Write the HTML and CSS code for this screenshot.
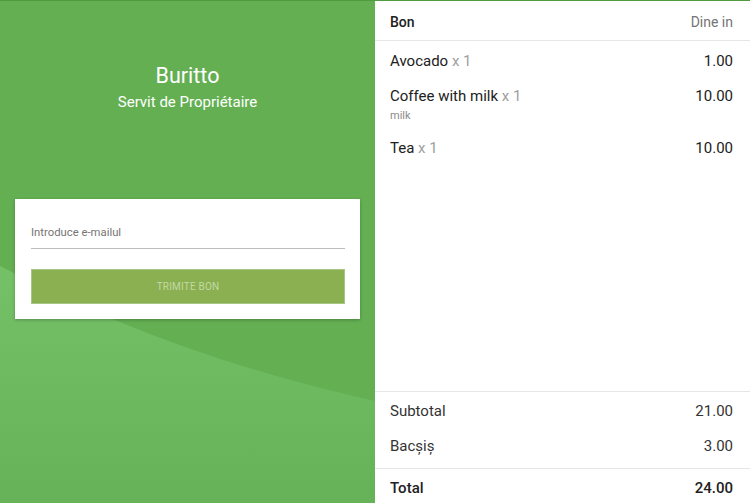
FILE: index.html
```html
<!DOCTYPE html>
<html lang="ro">
<head>
    <meta charset="UTF-8">
    <meta name="viewport" content="width=device-width, initial-scale=1.0">
    <title>Bon</title>
    <link rel="stylesheet" href="styles.css">
</head>
<body>

    <div class="app">
        <!-- partea stanga: restaurant + trimitere bon -->
        <section class="left">
            <svg class="wave" width="375" height="503" viewBox="0 0 375 503" preserveAspectRatio="none">
                <defs>
                    <linearGradient id="waveFill" x1="0" y1="0" x2="0" y2="1">
                        <stop offset="0" stop-color="#75c167"/>
                        <stop offset="1" stop-color="#66b258"/>
                    </linearGradient>
                </defs>
                <path d="M0 265 Q170 355 375 400 L375 503 L0 503 Z" fill="url(#waveFill)"/>
            </svg>

            <div class="brand">
                <h1 class="brand-title">Buritto</h1>
                <p class="brand-sub">Servit de Propriétaire</p>
            </div>

            <div class="card">
                <div class="field">
                    <span class="field-label">Introduce e-mailul</span>
                </div>
                <button class="send-btn" disabled>Trimite bon</button>
            </div>
        </section>

        <!-- partea dreapta: bonul -->
        <section class="receipt">
            <div class="receipt-header">
                <span class="receipt-title">Bon</span>
                <span class="receipt-type">Dine in</span>
            </div>

            <ul class="items">
                <li class="item">
                    <div class="item-main">
                        <span class="item-name">Avocado <span class="qty">x 1</span></span>
                        <span class="item-price">1.00</span>
                    </div>
                </li>
                <li class="item">
                    <div class="item-main">
                        <span class="item-name">Coffee with milk <span class="qty">x 1</span></span>
                        <span class="item-price">10.00</span>
                    </div>
                    <div class="item-note">milk</div>
                </li>
                <li class="item">
                    <div class="item-main">
                        <span class="item-name">Tea <span class="qty">x 1</span></span>
                        <span class="item-price">10.00</span>
                    </div>
                </li>
            </ul>

            <div class="summary">
                <div class="sum-row">
                    <span>Subtotal</span>
                    <span>21.00</span>
                </div>
                <div class="sum-row">
                    <span>Bacșiș</span>
                    <span>3.00</span>
                </div>
            </div>
            <div class="total-row">
                <span>Total</span>
                <span>24.00</span>
            </div>
        </section>
    </div>

</body>
</html>
```

FILE: styles.css
```css
/* layout general */
body {
    margin: 0;
    padding: 0;
    font-family: Roboto, "Liberation Sans", Arial, sans-serif;
    background-color: #fff;
}
.app {
    display: flex;
    width: 750px;
    height: 503px;
    box-sizing: border-box;
    border-top: 1px solid #4f9b40;
    overflow: hidden;
}

/* partea stanga */
.left {
    position: relative;
    width: 375px;
    flex: none;
    background-color: #63af52;
    overflow: hidden;
}
.wave {
    position: absolute;
    left: 0;
    top: 0;
    z-index: 0;
}
.brand {
    position: relative;
    z-index: 1;
    text-align: center;
    color: #fff;
    padding-top: 62px;
}
.brand-title {
    margin: 0;
    font-size: 21.5px;
    font-weight: 400;
    line-height: 26px;
}
.brand-sub {
    margin: 3px 0 0;
    font-size: 15px;
    line-height: 20px;
}
.card {
    position: relative;
    z-index: 1;
    margin: 87px 15px 0;
    padding: 26px 15px 15px 16px;
    background-color: #fff;
    box-shadow: 0 1px 3px rgba(0, 0, 0, 0.25);
}
.field {
    padding-bottom: 7px;
    border-bottom: 1px solid #bdbdbd;
}
.field-label {
    display: block;
    font-size: 11.3px;
    line-height: 16px;
    color: #757575;
}
.send-btn {
    display: block;
    width: 100%;
    height: 35px;
    margin-top: 20px;
    padding: 0;
    font-family: inherit;
    font-size: 10px;
    text-transform: uppercase;
    letter-spacing: 0.2px;
    color: #c3d9a2;
    background-color: #8bb052;
    border: 1px solid #a6c77f;
    border-radius: 0;
}

/* bonul */
.receipt {
    flex: 1;
    display: flex;
    flex-direction: column;
    background-color: #fff;
}
.receipt-header {
    display: flex;
    justify-content: space-between;
    align-items: center;
    height: 37px;
    padding: 2px 17px 0 15px;
    border-bottom: 1px solid #e6e6e6;
    font-size: 14px;
}
.receipt-title {
    font-weight: 500;
    color: #212121;
}
.receipt-type {
    color: #757575;
}
.items {
    list-style: none;
    margin: 0;
    padding: 10px 17px 0 15px;
}
.item {
    margin-bottom: 15px;
}
.item-main {
    display: flex;
    justify-content: space-between;
    font-size: 15px;
    line-height: 20px;
    color: #212121;
}
.qty {
    color: #9e9e9e;
}
.item-note {
    margin-top: 3px;
    margin-bottom: 3px;
    font-size: 11px;
    line-height: 14px;
    color: #8a8a8a;
}
.summary {
    margin-top: auto;
    padding: 9px 17px 12px 15px;
    border-top: 1px solid #e6e6e6;
}
.sum-row {
    display: flex;
    justify-content: space-between;
    font-size: 15px;
    line-height: 20px;
    color: #333;
}
.sum-row + .sum-row {
    margin-top: 15px;
}
.total-row {
    display: flex;
    justify-content: space-between;
    padding: 9px 17px 5px 15px;
    border-top: 1px solid #e6e6e6;
    font-size: 15px;
    line-height: 20px;
    font-weight: 500;
    color: #212121;
}
```
